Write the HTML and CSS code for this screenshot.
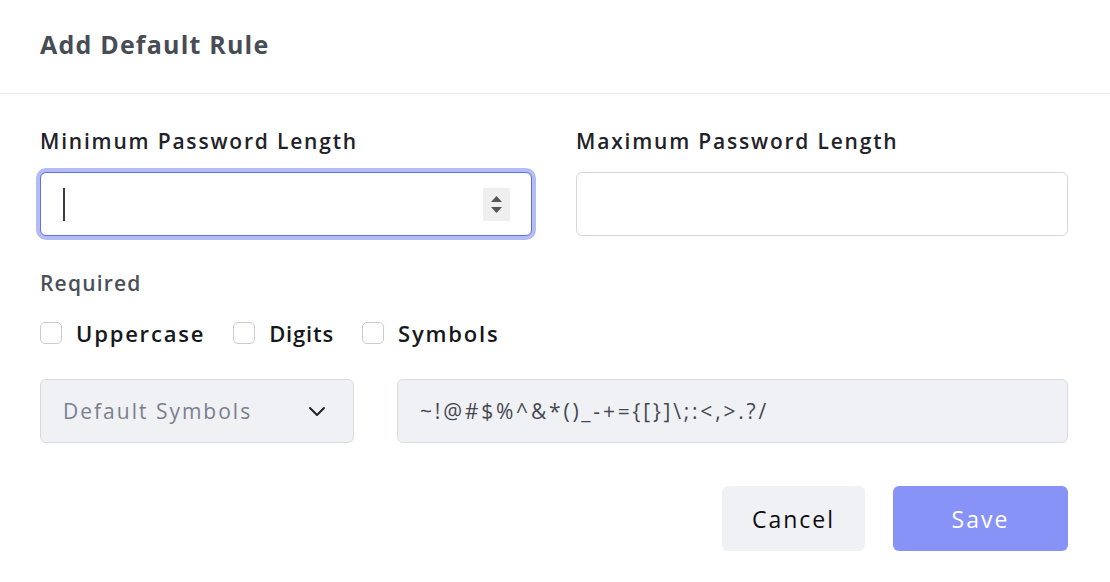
FILE: index.html
```html
<!DOCTYPE html>
<html>
<head>
<meta charset="utf-8">
<link rel="stylesheet" href="styles.css">
</head>
<body>
<div class="dialog">
  <div class="header"><h2 class="title">Add Default Rule</h2></div>
  <div class="content">
    <div class="row-two">
      <div class="field">
        <label class="label">Minimum Password Length</label>
        <div class="input focused">
          <span class="caret"></span>
          <span class="spinner">
            <svg width="27" height="33" viewBox="0 0 27 33"><path d="M8 14 L13.5 8 L19 14 Z" fill="#555"/><path d="M8 19 L13.5 25 L19 19 Z" fill="#555"/></svg>
          </span>
        </div>
      </div>
      <div class="field">
        <label class="label">Maximum Password Length</label>
        <div class="input"></div>
      </div>
    </div>
    <div class="section-label">Required</div>
    <div class="checks">
      <label class="check upper"><span class="box"></span>Uppercase</label>
      <label class="check digits"><span class="box"></span>Digits</label>
      <label class="check syms"><span class="box"></span>Symbols</label>
    </div>
    <div class="symbol-row">
      <div class="select">
        <span class="placeholder">Default Symbols</span>
        <svg class="chev" width="20" height="14" viewBox="0 0 20 14"><path d="M3 4 L10 11 L17 4" fill="none" stroke="#222" stroke-width="2" stroke-linecap="round" stroke-linejoin="round"/></svg>
      </div>
      <div class="symbols">~!@#$%^&amp;*()_-+={[}]\;:&lt;,&gt;.?/</div>
    </div>
    <div class="actions">
      <button class="btn cancel">Cancel</button>
      <button class="btn save">Save</button>
    </div>
  </div>
</div>
</body>
</html>
```
FILE: styles.css
```css
html, body {
  margin: 0;
  padding: 0;
  background: #fff;
  font-family: "Open Sans", "Noto Sans", sans-serif;
}
.dialog {
  width: 1110px;
  height: 582px;
}
.header {
  border-bottom: 1px solid #ededed;
  padding: 0 40px 6px;
  box-sizing: border-box;
  height: 94px;
  display: flex;
  align-items: center;
}
.title {
  margin: 0;
  font-size: 25px;
  font-weight: 700;
  color: #484c54;
  letter-spacing: 1.2px;
}
.content {
  padding: 32px 42px 0 40px;
}
.row-two {
  display: grid;
  grid-template-columns: 492px 492px;
  column-gap: 44px;
}
.field {
  display: flex;
  flex-direction: column;
}
.label {
  font-size: 21px;
  line-height: 30px;
  font-weight: 600;
  color: #1f2329;
  letter-spacing: 1.8px;
  margin-bottom: 16px;
}
.input {
  height: 64px;
  box-sizing: border-box;
  border: 1px solid #d4d6db;
  border-radius: 6px;
  background: #fff;
  display: flex;
  align-items: center;
  padding: 0 21px 0 22px;
}
.input.focused {
  border: 1px solid #5f6ee9;
  box-shadow: 0 0 0 4px #b4bcf6;
  border-radius: 6px;
}
.caret {
  width: 2px;
  height: 33px;
  background: #3a3d42;
}
.spinner {
  margin-left: auto;
  width: 27px;
  height: 33px;
  background: #efefef;
  display: block;
}
.spinner svg { display: block; }
.section-label {
  margin-top: 32px;
  font-size: 21px;
  line-height: 30px;
  font-weight: 600;
  letter-spacing: 1.2px;
  color: #4a4f58;
}
.checks {
  margin-top: 20px;
  display: flex;
  gap: 28px;
  height: 30px;
  align-items: center;
}
.check {
  display: flex;
  align-items: center;
  gap: 14px;
  font-size: 22px;
  font-weight: 600;
  letter-spacing: 1.4px;
  color: #15181c;
}
.check.upper { letter-spacing: 1.8px; }
.check.digits { letter-spacing: 0.8px; }
.check.syms { letter-spacing: 1.8px; }
.box {
  width: 22px;
  height: 22px;
  box-sizing: border-box;
  border: 1px solid #c9cbd0;
  border-radius: 5px;
  background: #fff;
}
.symbol-row {
  margin-top: 31px;
  display: flex;
  gap: 43px;
}
.select {
  width: 314px;
  height: 64px;
  box-sizing: border-box;
  background: #f0f1f5;
  border: 1px solid #d9dbe0;
  border-radius: 6px;
  display: flex;
  align-items: center;
  padding: 0 26px 0 22px;
}
.placeholder {
  font-size: 21px;
  letter-spacing: 2px;
  color: #7b7f8e;
}
.chev { margin-left: auto; display: block; }
.symbols {
  flex: 1;
  height: 64px;
  box-sizing: border-box;
  background: #f0f1f5;
  border: 1px solid #d9dbe0;
  border-radius: 6px;
  display: flex;
  align-items: center;
  padding: 0 22px;
  font-size: 21px;
  letter-spacing: 2.8px;
  color: #444850;
}
.actions {
  margin-top: 43px;
  display: flex;
  justify-content: flex-end;
  gap: 28px;
}
.btn {
  height: 65px;
  border: none;
  border-radius: 6px;
  font-family: inherit;
  font-size: 23px;
  font-weight: 400;
  letter-spacing: 2px;
  cursor: pointer;
}
.cancel {
  width: 143px;
  background: #f0f1f5;
  color: #0c0d10;
}
.save {
  width: 175px;
  background: #8893f7;
  color: #fff;
}
```
